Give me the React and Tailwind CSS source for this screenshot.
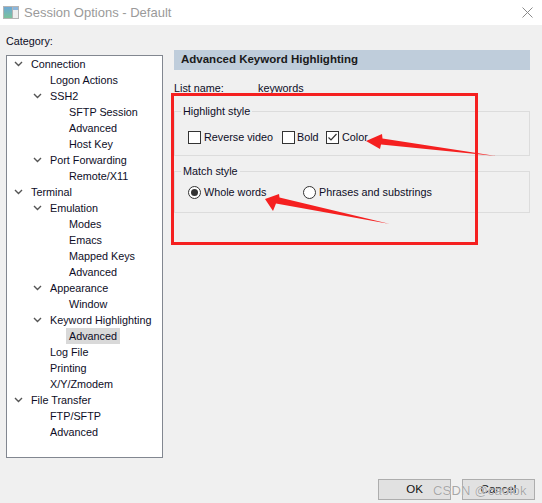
import React from "react";

const tree = [
  { label: "Connection", level: 0, open: true },
  { label: "Logon Actions", level: 1 },
  { label: "SSH2", level: 1, open: true },
  { label: "SFTP Session", level: 2 },
  { label: "Advanced", level: 2 },
  { label: "Host Key", level: 2 },
  { label: "Port Forwarding", level: 1, open: true },
  { label: "Remote/X11", level: 2 },
  { label: "Terminal", level: 0, open: true },
  { label: "Emulation", level: 1, open: true },
  { label: "Modes", level: 2 },
  { label: "Emacs", level: 2 },
  { label: "Mapped Keys", level: 2 },
  { label: "Advanced", level: 2 },
  { label: "Appearance", level: 1, open: true },
  { label: "Window", level: 2 },
  { label: "Keyword Highlighting", level: 1, open: true },
  { label: "Advanced", level: 2, selected: true },
  { label: "Log File", level: 1 },
  { label: "Printing", level: 1 },
  { label: "X/Y/Zmodem", level: 1 },
  { label: "File Transfer", level: 0, open: true },
  { label: "FTP/SFTP", level: 1 },
  { label: "Advanced", level: 1 },
];

const indent = ["pl-[7px]", "pl-[26px]", "pl-[45px]"];

const Chevron = () => (
  <svg width="9" height="6" viewBox="0 0 9 6">
    <polyline
      points="1,1 4.5,4.5 8,1"
      fill="none"
      stroke="#555"
      strokeWidth="1.4"
    />
  </svg>
);

const Checkbox = ({ checked }) => (
  <span className="w-[13px] h-[13px] border border-[#333] bg-white flex items-center justify-center shrink-0">
    {checked && (
      <svg width="11" height="11" viewBox="0 0 11 11">
        <polyline
          points="1.5,5.5 4,8 9.5,2"
          fill="none"
          stroke="#333"
          strokeWidth="1.2"
        />
      </svg>
    )}
  </span>
);

const Radio = ({ checked }) => (
  <span className="w-[13px] h-[13px] rounded-full border border-[#333] bg-white flex items-center justify-center shrink-0">
    {checked && <span className="w-[7px] h-[7px] rounded-full bg-[#333]" />}
  </span>
);

const GroupBox = ({ title, className, children }) => (
  <div className={`relative border border-[#dcdcdc] ${className}`}>
    <span className="absolute -top-[8px] left-[6px] px-[2px] bg-[#f0f0f0] leading-[14px]">
      {title}
    </span>
    {children}
  </div>
);

export default function App() {
  return (
    <div
      className="relative w-[542px] h-[503px] bg-[#f0f0f0] overflow-hidden text-[10.8px] text-[#0d0d26]"
      style={{ fontFamily: '"Liberation Sans", Arial, sans-serif' }}
    >
      {/* title bar */}
      <div className="h-[25px] bg-white flex items-center">
        <div className="ml-[3px] w-[16px] h-[13px] bg-[#b4b4b4] p-[1px] flex">
          <div className="w-[8px] h-full bg-gradient-to-b from-[#6fa8d4] to-[#7cc29a]" />
          <div className="flex-1 bg-[#eeeeee] ml-[1px] flex flex-col">
            <div className="h-[3px] bg-[#8cb6dc]" />
          </div>
        </div>
        <span className="ml-[5px] text-[13px] text-[#9a9a9a]">
          Session Options - Default
        </span>
        <svg className="ml-auto mr-[9px]" width="11" height="11" viewBox="0 0 11 11">
          <path d="M0.5 0.5 L10.5 10.5 M10.5 0.5 L0.5 10.5" stroke="#8a8a8a" strokeWidth="1" />
        </svg>
      </div>

      <div className="flex">
        {/* left: category tree */}
        <div className="pl-[6px] w-[163px] shrink-0">
          <div className="pt-[9px] leading-[14px]">Category:</div>
          <div className="mt-[7px] h-[403px] border border-[#828790] bg-white">
            {tree.map((item, i) => (
              <div
                key={i}
                className={`h-[16px] flex items-center ${indent[item.level]}`}
              >
                <span className="w-[17px] shrink-0 flex items-center">
                  {item.open && <Chevron />}
                </span>
                <span
                  className={`px-[3px] -ml-[3px] leading-[16px] whitespace-nowrap ${
                    item.selected ? "bg-[#d9d9d9]" : ""
                  }`}
                >
                  {item.label}
                </span>
              </div>
            ))}
          </div>
        </div>

        {/* right: page */}
        <div className="ml-[11px] w-[356px] shrink-0">
          <div className="mt-[25px] h-[20px] bg-[#bfcddb] flex items-center pl-[7px] font-bold text-[11.5px] text-[#1a1a1a]">
            Advanced Keyword Highlighting
          </div>
          <div className="mt-[11px] h-[14px] flex items-center">
            <span className="w-[84px]">List name:</span>
            <span>keywords</span>
          </div>

          <GroupBox title="Highlight style" className="mt-[16px] h-[45px]">
            <div className="pt-[17px] pl-[13px] flex items-center">
              <label className="w-[94px] flex items-center gap-[3px]">
                <Checkbox />
                <span>Reverse video</span>
              </label>
              <label className="w-[44px] flex items-center gap-[2px]">
                <Checkbox />
                <span>Bold</span>
              </label>
              <label className="flex items-center gap-[3px]">
                <Checkbox checked />
                <span>Color</span>
              </label>
            </div>
          </GroupBox>

          <GroupBox title="Match style" className="mt-[15px] h-[42px]">
            <div className="pt-[12px] pl-[13px] flex items-center">
              <label className="w-[115px] flex items-center gap-[3px]">
                <Radio checked />
                <span>Whole words</span>
              </label>
              <label className="flex items-center gap-[3px]">
                <Radio />
                <span>Phrases and substrings</span>
              </label>
            </div>
          </GroupBox>
        </div>
      </div>

      {/* buttons */}
      <div className="mt-[21px] flex justify-end pr-[7px] gap-[11px]">
        <button className="w-[73px] h-[21px] border border-[#adadad] bg-[#e1e1e1] text-[11.5px] text-[#111]">
          OK
        </button>
        <button className="w-[73px] h-[21px] border border-[#adadad] bg-[#e1e1e1] text-[11.5px] text-[#111]">
          Cancel
        </button>
      </div>

      {/* annotations */}
      <div className="absolute left-[171px] top-[93px] w-[307px] h-[152px] border-[3px] border-[#f52020]" />
      <svg className="absolute left-0 top-0 pointer-events-none" width="542" height="503">
        <polygon
          points="366,141 382,134 382.5,138.5 496,156 381,144.5 380,149"
          fill="#f52020"
        />
        <polygon
          points="265,199 279,194 279.5,197.5 390,224 276,203.5 273,211"
          fill="#f52020"
        />
      </svg>
      <span
        className="absolute left-[433px] top-[481px] text-[13px] text-[#a8a8a8] tracking-[0.2px]"
        style={{ textShadow: "0 0 1px #fff" }}
      >
        CSDN @caolok
      </span>
    </div>
  );
}
